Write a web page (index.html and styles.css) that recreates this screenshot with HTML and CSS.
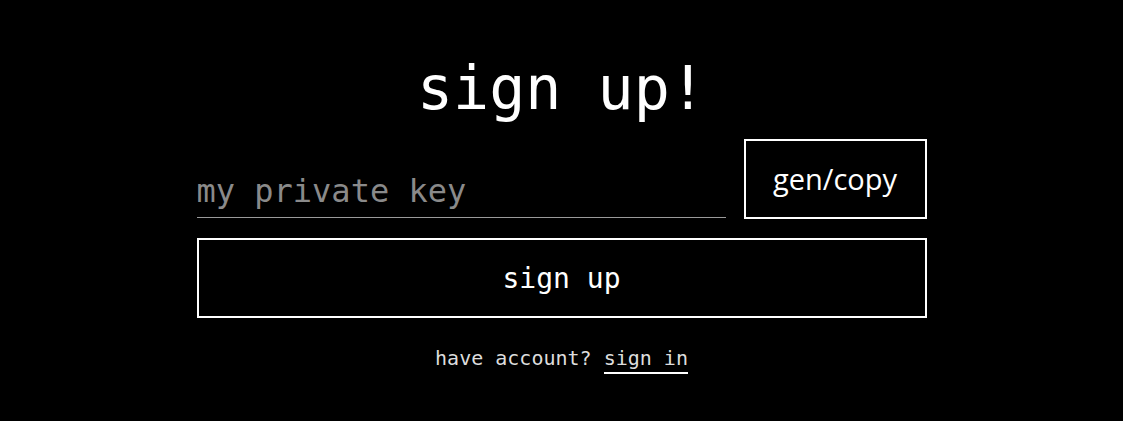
FILE: index.html
```html
<!DOCTYPE html>
<html>
<head>
<meta charset="utf-8">
<link rel="stylesheet" href="styles.css">
</head>
<body>
<main class="wrap">
  <h1 class="title">sign up!</h1>
  <div class="row">
    <input class="key" type="text" placeholder="my private key">
    <button class="gen">gen/copy</button>
  </div>
  <button class="signup">sign up</button>
  <p class="alt">have account? <a class="link" href="#">sign in</a></p>
</main>
</body>
</html>
```
FILE: styles.css
```css
html, body {
  margin: 0;
  padding: 0;
  background: #000;
  color: #fff;
}
.wrap {
  width: 730px;
  margin: 0 auto;
  display: flex;
  flex-direction: column;
  align-items: stretch;
  font-family: "DejaVu Sans Mono", monospace;
}
.title {
  margin: 53px 0 0;
  font-size: 60px;
  line-height: 70px;
  font-weight: normal;
  text-align: center;
  color: #fff;
}
.row {
  display: flex;
  gap: 18px;
  margin-top: 16px;
  align-items: flex-start;
}
.key {
  flex: 1;
  min-width: 0;
  background: transparent;
  border: none;
  border-bottom: 1px solid #9a9a9a;
  color: #fff;
  font-family: "DejaVu Sans Mono", monospace;
  font-size: 32px;
  padding: 30px 0 4px;
  outline: none;
  height: 79px;
  box-sizing: border-box;
}
.key::placeholder {
  color: #8a8a8a;
}
.gen {
  width: 183px;
  height: 80px;
  box-sizing: border-box;
  background: #000;
  border: 2px solid #fff;
  color: #fff;
  font-family: "Open Sans", sans-serif;
  font-size: 29px;
  padding: 0 0 2px;
}
.signup {
  margin-top: 19px;
  height: 80px;
  box-sizing: border-box;
  background: #000;
  border: 2px solid #fff;
  color: #fff;
  font-family: "DejaVu Sans Mono", monospace;
  font-size: 28px;
  padding: 0;
}
.alt {
  margin: 28px 0 0;
  text-align: center;
  font-size: 20px;
  line-height: 24px;
  color: #ddd;
}
.link {
  display: inline-block;
  color: #ddd;
  text-decoration: none;
  border-bottom: 2px solid #fff;
  line-height: 22px;
  padding-bottom: 3px;
}
```
